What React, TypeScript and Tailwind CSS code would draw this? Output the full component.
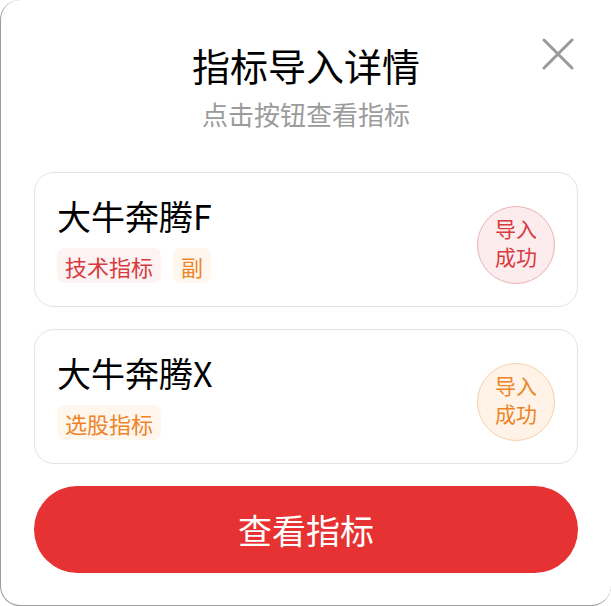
import React from "react";

type Tag = { label: string; tone: "red" | "orange" };

type Item = {
  name: string;
  tags: Tag[];
  tone: "red" | "orange";
};

const items: Item[] = [
  {
    name: "大牛奔腾F",
    tags: [
      { label: "技术指标", tone: "red" },
      { label: "副", tone: "orange" },
    ],
    tone: "red",
  },
  {
    name: "大牛奔腾X",
    tags: [{ label: "选股指标", tone: "orange" }],
    tone: "orange",
  },
];

const tagTone = {
  red: "bg-[#fdf3f3] text-[#d83a3f]",
  orange: "bg-[#fff6ee] text-[#ee8427]",
};

const badgeTone = {
  red: "bg-[#fdeced] border-[#eab2b4] text-[#d83a3f]",
  orange: "bg-[#fff3e8] border-[#f5d0ab] text-[#ee8427]",
};

const IndicatorCard = ({ item }: { item: Item }) => {
  return (
    <div className="flex h-[135px] items-center justify-between rounded-[20px] border border-[#e3e3e3] bg-white pl-[22px] pr-[22px]">
      <div className="flex flex-col">
        <div className="text-[34px] leading-[40px] text-black">{item.name}</div>
        <div className="mt-3 flex gap-3">
          {item.tags.map((tag) => (
            <span
              key={tag.label}
              className={`flex h-[35px] items-center rounded-[8px] px-2 text-[22px] leading-none ${tagTone[tag.tone]}`}
            >
              {tag.label}
            </span>
          ))}
        </div>
      </div>
      <div
        className={`mt-[10px] flex h-[78px] w-[78px] flex-col items-center justify-center rounded-full border pb-[6px] text-[21px] leading-[28px] ${badgeTone[item.tone]}`}
      >
        <span>导入</span>
        <span>成功</span>
      </div>
    </div>
  );
};

export default function App() {
  return (
    <div className="h-[606px] w-[611px] bg-white font-['Noto_Sans_CJK_SC','Noto_Sans',sans-serif]">
      <div className="relative flex h-full flex-col rounded-[20px] border-b border-l border-[#9c9c9c] px-[33px] pt-[42px]">
        <button className="absolute right-[37px] top-[38px] h-8 w-8 text-[#9a9a9a]">
          <svg viewBox="0 0 32 32" className="h-8 w-8" fill="none" stroke="currentColor" strokeWidth="3" strokeLinecap="round">
            <path d="M2 2L30 30M30 2L2 30" />
          </svg>
        </button>

        <h1 className="text-center text-[38px] font-normal leading-[46px] text-black">指标导入详情</h1>
        <p className="mt-[9px] text-center text-[26px] leading-[34px] text-[#9b9b9b]">点击按钮查看指标</p>

        <div className="mt-[41px] flex flex-col gap-[22px]">
          {items.map((item) => (
            <IndicatorCard key={item.name} item={item} />
          ))}
        </div>

        <button className="mt-[22px] flex h-[87px] w-full items-center justify-center rounded-full bg-[#e63233] text-[34px] text-white">
          查看指标
        </button>
      </div>
    </div>
  );
}
